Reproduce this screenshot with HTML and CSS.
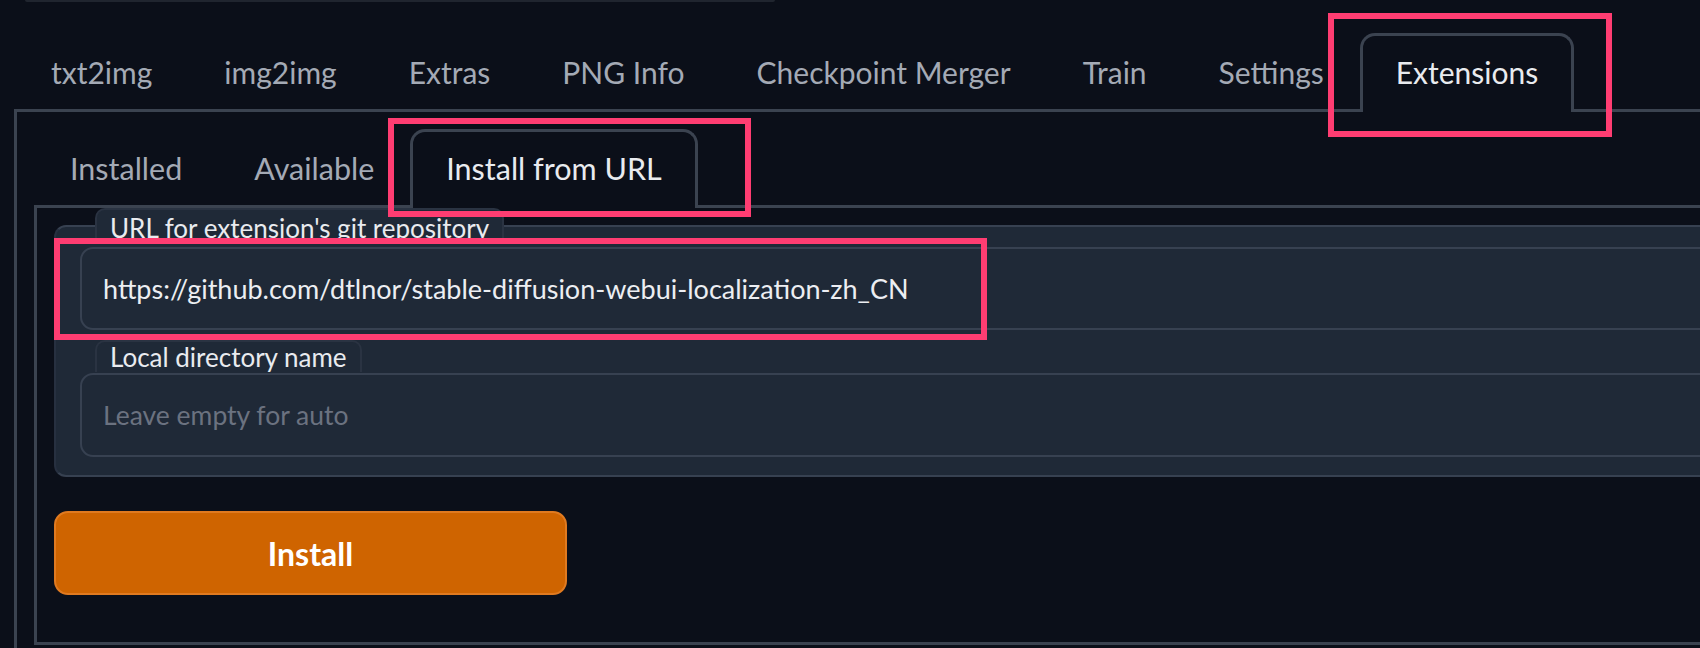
FILE: index.html
```html
<!DOCTYPE html>
<html lang="en">
<head>
<meta charset="utf-8">
<title>Extensions - Install from URL</title>
<link rel="stylesheet" href="styles.css">
</head>
<body>
<div class="app">
  <div class="topline"></div>
  <nav class="tabs main-tabs">
    <button class="tab">txt2img</button>
    <button class="tab">img2img</button>
    <button class="tab">Extras</button>
    <button class="tab">PNG Info</button>
    <button class="tab">Checkpoint Merger</button>
    <button class="tab">Train</button>
    <button class="tab">Settings</button>
    <button class="tab active">Extensions</button>
  </nav>
  <section class="panel outer">
    <nav class="tabs sub-tabs">
      <button class="tab">Installed</button>
      <button class="tab">Available</button>
      <button class="tab active">Install from URL</button>
    </nav>
    <section class="panel inner">
      <div class="block">
        <div class="field first">
          <span class="label">URL for extension's git repository</span>
          <input class="input" type="text" value="https://github.com/dtlnor/stable-diffusion-webui-localization-zh_CN" readonly>
        </div>
        <div class="field second">
          <span class="label">Local directory name</span>
          <input class="input" type="text" placeholder="Leave empty for auto">
        </div>
      </div>
      <button class="install">Install</button>
    </section>
  </section>
  <div class="mark mark-ext"></div>
  <div class="mark mark-url-tab"></div>
  <div class="mark mark-url-field"></div>
</div>
</body>
</html>
```
FILE: styles.css
```css
html, body {
  margin: 0;
  padding: 0;
  background: #0b0f19;
  overflow: hidden;
}

.app {
  position: relative;
  width: 1800px;
  font-family: Lato, "Liberation Sans", sans-serif;
}

.topline {
  margin-left: 25px;
  width: 750px;
  height: 2px;
  background: #20252f;
  border-radius: 0 0 4px 4px;
}

.tabs {
  display: flex;
  height: 76px;
}

.main-tabs {
  margin: 31px 0 0 15px;
}

.tab {
  position: relative;
  z-index: 1;
  display: flex;
  align-items: center;
  height: 79px;
  box-sizing: border-box;
  margin: 0;
  padding: 0 33px 4px;
  border: 3px solid transparent;
  border-bottom: 0;
  border-radius: 15px 15px 0 0;
  background: transparent;
  color: #a4aab5;
  font-family: inherit;
  font-size: 30px;
  white-space: nowrap;
  cursor: pointer;
}

.sub-tabs .tab {
  font-size: 30.5px;
}

.tab.active {
  border-color: #3b4350;
  background: #0b0f19;
  color: #e9ebef;
}

.panel {
  border: 3px solid #3b4350;
}

.outer {
  margin-left: 14px;
  padding: 17px 0 20px 17px;
}

.inner {
  padding: 17px 0 47px 17px;
}

.block {
  background: #1f2937;
  border: 2px solid #374151;
  border-left-color: #273040;
  border-radius: 12px 0 0 12px;
  padding: 0 0 18px 24px;
}

.field {
  display: flex;
  flex-direction: column;
  align-items: flex-start;
}

.field.first {
  margin-top: -19px;
}

.field.second {
  margin-top: 10px;
}

.label {
  position: relative;
  z-index: 0;
  margin-left: 15px;
  padding: 0 13px;
  line-height: 30px;
  font-size: 26px;
  color: #e9ebef;
  background: #1f2937;
  border: 2px solid #2a3342;
  border-bottom: 0;
  border-radius: 10px 10px 0 0;
}

.field.first .label {
  padding-top: 3px;
}

.input {
  position: relative;
  z-index: 1;
  align-self: stretch;
  box-sizing: border-box;
  height: 83px;
  margin: 0;
  padding: 0 21px;
  background: #1f2937;
  border: 2px solid #374151;
  border-radius: 13px;
  color: #eceef2;
  font-family: inherit;
  font-size: 27px;
  outline: none;
}

.field.first .input {
  margin-top: 4px;
}

.field.second .input {
  height: 84px;
  margin-top: 1px;
  font-size: 26.5px;
}

.input::placeholder {
  color: #6b7280;
}

.install {
  display: block;
  width: 513px;
  height: 84px;
  margin-top: 34px;
  box-sizing: border-box;
  background: #cf6400;
  border: 2px solid #e07a20;
  border-radius: 14px;
  color: #ffffff;
  font-family: inherit;
  font-weight: 700;
  font-size: 32px;
  cursor: pointer;
}

.mark {
  position: absolute;
  z-index: 5;
  box-sizing: border-box;
  border: 6px solid #ff3d72;
  pointer-events: none;
}

.mark-ext {
  left: 1328px;
  top: 13px;
  width: 284px;
  height: 124px;
}

.mark-url-tab {
  left: 388px;
  top: 118px;
  width: 363px;
  height: 99px;
}

.mark-url-field {
  left: 54px;
  top: 238px;
  width: 933px;
  height: 102px;
}
```
